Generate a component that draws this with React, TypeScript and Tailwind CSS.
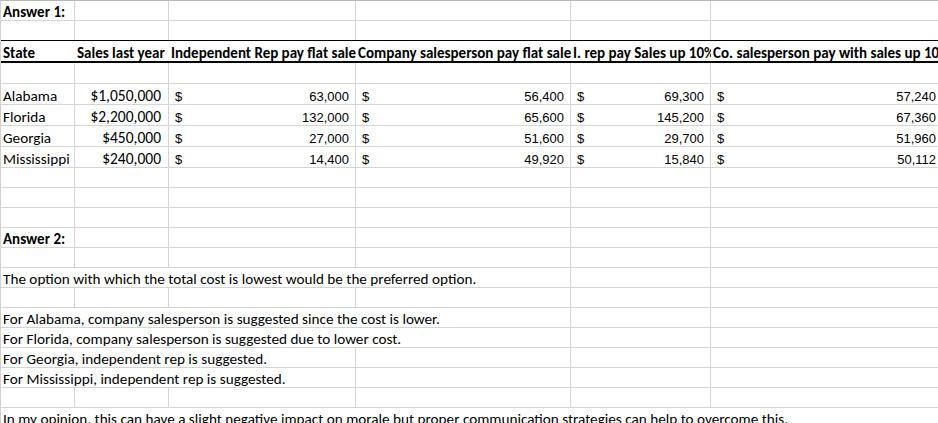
import React from "react";

type Cell = {
  text?: string;
  span?: number;
  bold?: boolean;
  kind?: "text" | "money" | "acct";
  noBorder?: boolean;
};

const GRID = "grid grid-cols-[74px_94px_187px_215px_140px_232px]";

function CellView({ c }: { c: Cell }) {
  const span =
    c.span === 6
      ? "col-span-6"
      : c.span === 4
      ? "col-span-4"
      : c.span === 3
      ? "col-span-3"
      : c.span === 2
      ? "col-span-2"
      : "col-span-1";
  const border = c.noBorder ? "" : "border-r border-[#d4d4d4]";
  if (c.kind === "acct") {
    return (
      <div
        className={`${span} ${border} flex items-end justify-between overflow-hidden whitespace-nowrap pl-[6px] pr-[6px] font-['Liberation_Sans',Arial,sans-serif] text-[13px] leading-[14px]`}
      >
        <span>$</span>
        <span>{c.text}</span>
      </div>
    );
  }
  if (c.kind === "money") {
    return (
      <div
        className={`${span} ${border} flex items-end justify-end overflow-hidden whitespace-nowrap pr-[7px] text-[15.5px] leading-[16px]`}
      >
        {c.text}
      </div>
    );
  }
  return (
    <div
      className={`${span} ${border} flex items-end overflow-hidden whitespace-nowrap pl-[2px] leading-[16px] ${
        c.bold ? "font-bold text-[15px]" : "text-[15.2px]"
      }`}
    >
      {c.text ?? ""}
    </div>
  );
}

function Row({
  cells,
  h = "h-[20px]",
  bottom = "border-b border-[#d4d4d4]",
}: {
  cells: Cell[];
  h?: string;
  bottom?: string;
}) {
  return (
    <div className={`${GRID} ${h} ${bottom}`}>
      {cells.map((c, i) => (
        <CellView key={i} c={c} />
      ))}
    </div>
  );
}

const empty = (): Cell[] => [{}, {}, {}, {}, {}, {}];

const data = [
  ["Alabama", "$1,050,000", "63,000", "56,400", "69,300", "57,240"],
  ["Florida", "$2,200,000", "132,000", "65,600", "145,200", "67,360"],
  ["Georgia", "$450,000", "27,000", "51,600", "29,700", "51,960"],
  ["Mississippi", "$240,000", "14,400", "49,920", "15,840", "50,112"],
];

const headers = [
  "State",
  "Sales last year",
  "Independent Rep pay flat sale",
  "Company salesperson pay flat sale",
  "I. rep pay Sales up 10%",
  "Co. salesperson pay with sales up 10%",
];

function textRow(text: string, span: number, bold = false): Cell[] {
  const rest: Cell[] = [];
  for (let i = span; i < 6; i++) rest.push({});
  return [{ text, span, bold }, ...rest];
}

export default function App() {
  return (
    <div className="w-[938px] h-[423px] overflow-hidden bg-white text-black font-['Carlito','Calibri','Lato',sans-serif]">
      <div className="w-[943px] border-t border-l border-t-[#b8b8b8] border-l-[#d0d0d0]">
        <Row cells={textRow("Answer 1:", 1, true)} />
        <Row cells={empty()} bottom="border-b border-black" />
        <Row
          h="h-[22px]"
          bottom="border-b-2 border-black"
          cells={headers.map((t) => ({ text: t, bold: true, noBorder: true }))}
        />
        <Row h="h-[21px]" cells={empty()} />
        {data.map((d) => (
          <Row
            key={d[0]}
            h="h-[21px]"
            cells={[
              { text: d[0] },
              { text: d[1], kind: "money" },
              { text: d[2], kind: "acct" },
              { text: d[3], kind: "acct" },
              { text: d[4], kind: "acct" },
              { text: d[5], kind: "acct" },
            ]}
          />
        ))}
        <Row cells={empty()} />
        <Row cells={empty()} />
        <Row cells={empty()} />
        <Row cells={textRow("Answer 2:", 1, true)} />
        <Row cells={empty()} />
        <Row
          cells={textRow(
            "The option with which the total cost is lowest would be the preferred option.",
            4
          )}
        />
        <Row cells={empty()} />
        <Row
          cells={textRow(
            "For Alabama, company salesperson is suggested since the cost is lower.",
            4
          )}
        />
        <Row
          cells={textRow(
            "For Florida, company salesperson is suggested due to lower cost.",
            4
          )}
        />
        <Row cells={textRow("For Georgia, independent rep is suggested.", 3)} />
        <Row cells={textRow("For Mississippi, independent rep is suggested.", 3)} />
        <Row cells={empty()} />
        <Row
          cells={textRow(
            "In my opinion, this can have a slight negative impact on morale but proper communication strategies can help to overcome this.",
            6
          )}
        />
      </div>
    </div>
  );
}
